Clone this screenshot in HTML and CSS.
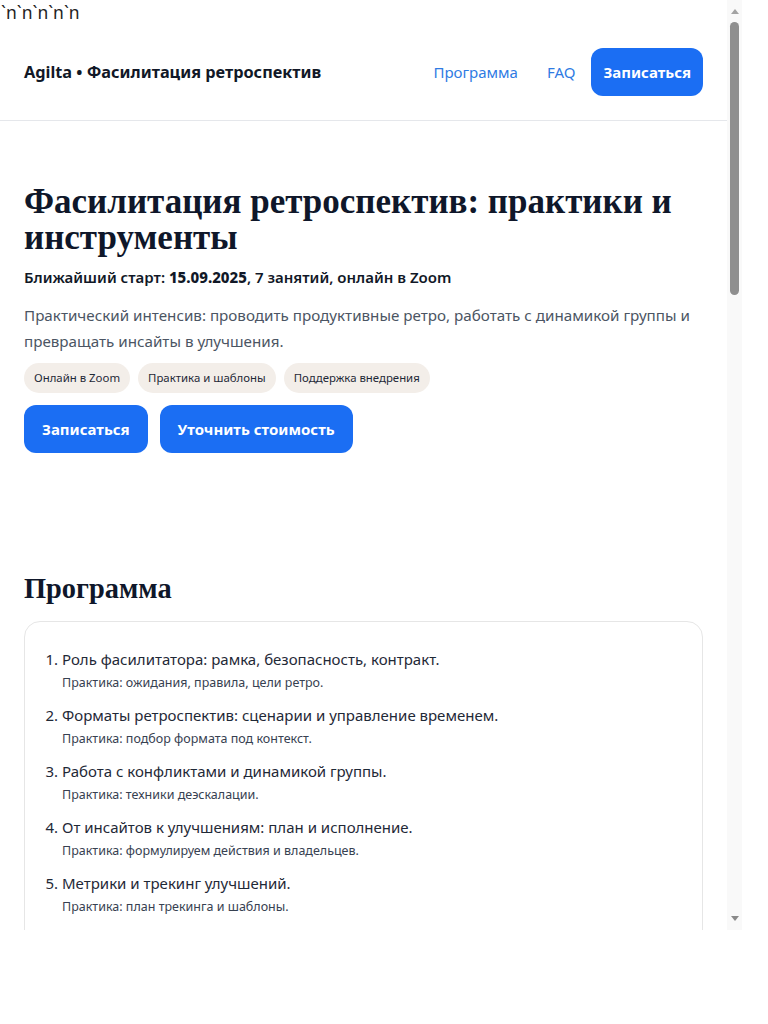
FILE: index.html
```html
<!DOCTYPE html>
<html lang="ru">
<head>
<meta charset="utf-8">
<title>Agilta • Фасилитация ретроспектив</title>
<link rel="stylesheet" href="styles.css">
</head>
<body>
<div class="frame">
  <div class="viewport">
    <div class="stray">`n`n`n`n`n</div>
    <header class="topbar">
      <div class="brand">Agilta • Фасилитация ретроспектив</div>
      <nav class="nav">
        <a class="nav-link" href="#program">Программа</a>
        <a class="nav-link" href="#faq">FAQ</a>
        <a class="btn btn-nav" href="#signup">Записаться</a>
      </nav>
    </header>
    <main class="content">
      <section class="hero">
        <h1 class="hero-title">Фасилитация ретроспектив: практики и инструменты</h1>
        <p class="hero-meta">Ближайший старт: <b>15.09.2025</b>, 7 занятий, онлайн в Zoom</p>
        <p class="hero-desc">Практический интенсив: проводить продуктивные ретро, работать с динамикой группы и превращать инсайты в улучшения.</p>
        <ul class="chips">
          <li class="chip">Онлайн в Zoom</li>
          <li class="chip">Практика и шаблоны</li>
          <li class="chip">Поддержка внедрения</li>
        </ul>
        <div class="actions">
          <a class="btn btn-hero" href="#signup">Записаться</a>
          <a class="btn btn-hero" href="#price">Уточнить стоимость</a>
        </div>
      </section>
      <section class="program" id="program">
        <h2 class="section-title">Программа</h2>
        <div class="card">
          <ol class="lessons">
            <li class="lesson">Роль фасилитатора: рамка, безопасность, контракт.<span class="lesson-note">Практика: ожидания, правила, цели ретро.</span></li>
            <li class="lesson">Форматы ретроспектив: сценарии и управление временем.<span class="lesson-note">Практика: подбор формата под контекст.</span></li>
            <li class="lesson">Работа с конфликтами и динамикой группы.<span class="lesson-note">Практика: техники деэскалации.</span></li>
            <li class="lesson">От инсайтов к улучшениям: план и исполнение.<span class="lesson-note">Практика: формулируем действия и владельцев.</span></li>
            <li class="lesson">Метрики и трекинг улучшений.<span class="lesson-note">Практика: план трекинга и шаблоны.</span></li>
          </ol>
        </div>
      </section>
    </main>
  </div>
  <div class="scrollbar" aria-hidden="true">
    <span class="arrow arrow-up"></span>
    <span class="thumb"></span>
    <span class="track-rest"></span>
    <span class="arrow arrow-down"></span>
  </div>
</div>
</body>
</html>
```
FILE: styles.css
```css
html, body {
  margin: 0;
  padding: 0;
  background: #ffffff;
}
body {
  font-family: "Noto Sans", "Open Sans", Arial, sans-serif;
  color: #111827;
}
.frame {
  display: flex;
  width: 742px;
  height: 930px;
  background: #ffffff;
}
.viewport {
  width: 727px;
  height: 930px;
  overflow: hidden;
  flex: none;
}
.scrollbar {
  width: 15px;
  height: 930px;
  flex: none;
  background: #f9f9f9;
  display: flex;
  flex-direction: column;
  align-items: center;
}
.arrow {
  width: 0;
  height: 0;
  border-left: 4.5px solid transparent;
  border-right: 4.5px solid transparent;
}
.arrow-up {
  margin-top: 9px;
  border-bottom: 5px solid #a3a3a3;
}
.arrow-down {
  margin-bottom: 9px;
  border-top: 5px solid #8a8a8a;
}
.thumb {
  margin-top: 8px;
  width: 9px;
  height: 273px;
  border-radius: 5px;
  background: #8f8f8f;
}
.track-rest {
  flex: 1;
}
.stray {
  height: 24px;
  font-size: 17.5px;
  line-height: 24px;
  color: #222;
  white-space: nowrap;
  padding-left: 1px;
}
.topbar {
  display: flex;
  align-items: center;
  justify-content: space-between;
  padding: 24px;
  border-bottom: 1px solid #e5e7eb;
}
.brand {
  font-size: 16.3px;
  font-weight: 700;
  color: #111827;
}
.nav {
  display: flex;
  align-items: center;
  gap: 16px;
}
.nav-link {
  color: #2f7be3;
  text-decoration: none;
  font-size: 15px;
}
.nav-link + .nav-link {
  margin-left: 13px;
}
.btn {
  display: inline-flex;
  align-items: center;
  justify-content: center;
  height: 48px;
  border-radius: 12px;
  background: #1b6ef3;
  color: #ffffff;
  font-weight: 700;
  font-size: 15px;
  text-decoration: none;
  box-sizing: border-box;
}
.btn-nav {
  padding: 0 12px;
}
.hero {
  padding: 63px 24px 60px;
}
.hero-title {
  margin: 0;
  font-family: "Liberation Serif", "DejaVu Serif", serif;
  font-size: 35px;
  line-height: 36px;
  font-weight: 700;
  color: #0f172a;
}
.hero-meta {
  margin: 10px 0 0;
  font-size: 15px;
  line-height: 22px;
  font-weight: 600;
  color: #111827;
}
.hero-meta b {
  font-weight: 800;
}
.hero-desc {
  margin: 14px 0 0;
  font-size: 15.2px;
  line-height: 26px;
  color: #4b5563;
}
.chips {
  list-style: none;
  margin: 9px 0 0;
  padding: 0;
  display: flex;
  gap: 8px;
}
.chip {
  background: #f3eee9;
  border-radius: 15px;
  height: 30px;
  line-height: 30px;
  padding: 0 10px;
  font-size: 11.4px;
  color: #1f2937;
}
.actions {
  margin-top: 12px;
  display: flex;
  gap: 12px;
}
.btn-hero {
  padding: 0 18px;
}
.program {
  padding: 60px 24px 60px;
}
.section-title {
  margin: 0 0 16px;
  font-family: "Liberation Serif", "DejaVu Serif", serif;
  font-size: 28.4px;
  line-height: 32px;
  font-weight: 700;
  color: #0f172a;
}
.card {
  border: 1px solid #e6e6e6;
  border-radius: 16px;
  padding: 26px 20px;
}
.lessons {
  margin: 0;
  padding-left: 17px;
}
.lesson {
  font-size: 15px;
  line-height: 22px;
  color: #1f2937;
  margin-bottom: 12px;
}
.lesson-note {
  display: block;
  margin-top: 4px;
  font-size: 12.5px;
  line-height: 18px;
  color: #374151;
}
```
